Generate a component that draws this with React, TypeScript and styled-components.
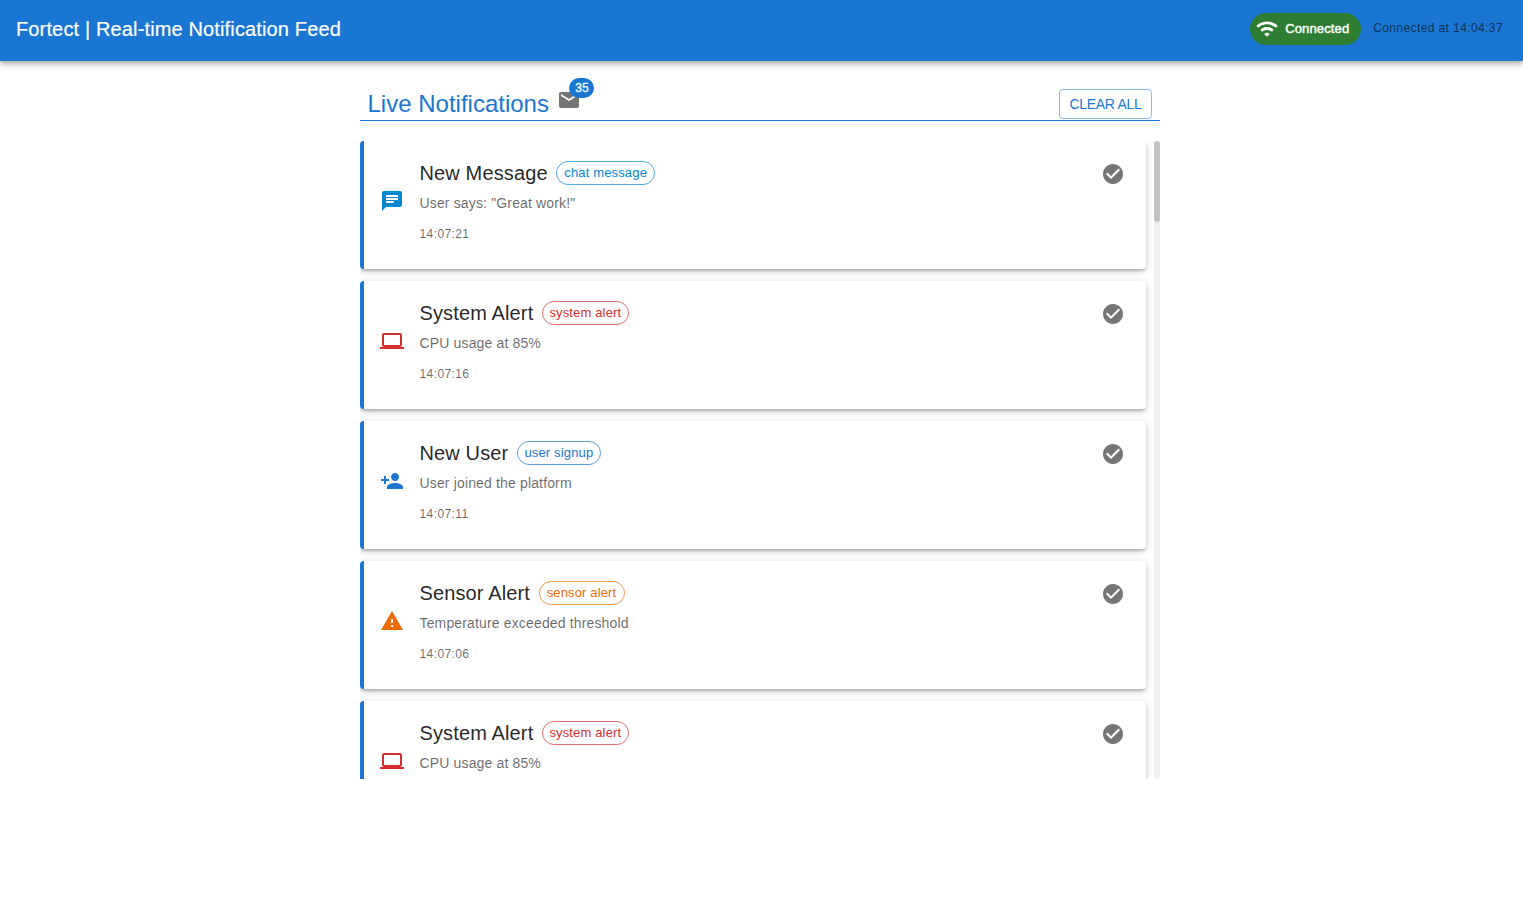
import React from 'react';
import styled, { createGlobalStyle } from 'styled-components';

const GlobalStyle = createGlobalStyle`
  *, *::before, *::after { box-sizing: border-box; }
  body {
    margin: 0;
    background: #fff;
    color: rgba(0, 0, 0, 0.87);
    font-family: "Liberation Sans", Arial, sans-serif;
  }
  h1, h2, h3, p { margin: 0; font-weight: 400; }
`;

const AppBar = styled.header`
  display: flex;
  align-items: center;
  justify-content: space-between;
  height: 61px;
  padding: 0 20px 4px 16px;
  background: #1976d2;
  color: #fff;
  box-shadow: 0 2px 4px -1px rgba(0, 0, 0, 0.2), 0 4px 5px 0 rgba(0, 0, 0, 0.14),
    0 1px 10px 0 rgba(0, 0, 0, 0.12);
`;

const AppTitle = styled.h1`
  font-size: 20px;
  line-height: 32px;
  letter-spacing: 0.14px;
  -webkit-text-stroke: 0.2px currentColor;
`;

const Status = styled.div`
  display: flex;
  align-items: center;
  gap: 12px;
`;

const StatusChip = styled.div`
  display: flex;
  align-items: center;
  gap: 6px;
  width: 111px;
  height: 32px;
  padding-left: 5px;
  border-radius: 16px;
  background: #2e7d32;
  font-size: 13px;
  letter-spacing: 0.14px;
  -webkit-text-stroke: 0.45px currentColor;
`;

const StatusTime = styled.span`
  color: rgba(0, 0, 0, 0.6);
  font-size: 12px;
  line-height: 20px;
  letter-spacing: 0.4px;
  padding-bottom: 2px;
`;

const Icon = styled.svg<{ $color?: string }>`
  display: block;
  flex: none;
  width: 24px;
  height: 24px;
  fill: ${(p) => p.$color ?? 'currentColor'};
`;

const Feed = styled.main`
  width: 800px;
  margin: 17px 0 0 360px;
`;

const FeedHeader = styled.div`
  display: flex;
  align-items: flex-end;
  justify-content: space-between;
  height: 43px;
  padding: 0 8px 1px 7.5px;
  border-bottom: 1px solid #1976d2;
`;

const Heading = styled.div`
  display: flex;
  align-items: flex-end;
  gap: 8.5px;
`;

const FeedTitle = styled.h2`
  color: #1976d2;
  font-size: 24px;
  line-height: 30px;
`;

const Mailbox = styled.div`
  position: relative;
  margin-bottom: 7px;
`;

const Badge = styled.span`
  position: absolute;
  top: -10px;
  left: 12px;
  width: 25px;
  height: 20px;
  border-radius: 10px;
  background: #1976d2;
  color: #fff;
  font-size: 12px;
  line-height: 20px;
  text-align: center;
  -webkit-text-stroke: 0.3px currentColor;
`;

const ClearButton = styled.button`
  width: 93px;
  height: 30px;
  padding: 0;
  border: 1px solid rgba(25, 118, 210, 0.5);
  border-radius: 4px;
  background: transparent;
  color: #1976d2;
  font: 14px/22px "Liberation Sans", Arial, sans-serif;
  letter-spacing: -0.3px;
  white-space: nowrap;
`;

const ScrollArea = styled.section`
  display: flex;
  justify-content: space-between;
  height: 638px;
  margin-top: 20px;
  overflow: hidden;
`;

const List = styled.div`
  display: flex;
  flex-direction: column;
  gap: 12px;
  width: 786px;
`;

const Track = styled.div`
  width: 6px;
  border-radius: 3px;
  background: #f1f1f1;
`;

const Thumb = styled.div`
  height: 81px;
  border-radius: 3px;
  background: #c1c1c1;
`;

const Card = styled.article`
  display: flex;
  flex: none;
  height: 128px;
  padding: 16px 21px 24px 16px;
  border-left: 4px solid #1976d2;
  border-radius: 4px;
  background: #fff;
  box-shadow: 0 3px 3px -2px rgba(0, 0, 0, 0.2), 0 3px 4px 0 rgba(0, 0, 0, 0.14),
    0 1px 8px 0 rgba(0, 0, 0, 0.12);
`;

const CardIcon = styled.div`
  display: flex;
  align-items: center;
  width: 39.5px;
`;

const CardBody = styled.div`
  flex: 1;
`;

const TitleRow = styled.div`
  display: flex;
  align-items: center;
  gap: 8.5px;
  height: 32px;
`;

const CardTitle = styled.h3`
  font-size: 20px;
  line-height: 32px;
  letter-spacing: 0.13px;
`;

const Tag = styled.span<{ $color: string; $border: string; $width: number }>`
  width: ${(p) => p.$width}px;
  height: 24px;
  border: 1px solid ${(p) => p.$border};
  border-radius: 12px;
  color: ${(p) => p.$color};
  font-size: 13px;
  line-height: 22px;
  letter-spacing: 0.15px;
  text-align: center;
  white-space: nowrap;
`;

const Message = styled.p`
  margin-top: 4px;
  color: rgba(0, 0, 0, 0.6);
  font-size: 14px;
  line-height: 20px;
  letter-spacing: 0.15px;
`;

const Time = styled.p`
  margin-top: 11px;
  color: rgba(0, 0, 0, 0.6);
  font-size: 12px;
  line-height: 20px;
  letter-spacing: 0.4px;
`;

const MarkRead = styled.div`
  padding-top: 5px;
`;

const paths = {
  wifi: 'M2.06 10.06c.51.51 1.32.56 1.87.1 4.67-3.84 11.45-3.84 16.13-.01.56.46 1.38.42 1.89-.09.59-.59.55-1.57-.1-2.1-5.71-4.67-13.97-4.67-19.69 0-.65.52-.7 1.5-.1 2.1m7.76 7.76 1.47 1.47c.39.39 1.02.39 1.41 0l1.47-1.47c.47-.47.37-1.28-.23-1.59-1.21-.63-2.68-.63-3.89 0-.6.31-.7 1.12-.23 1.59m-3.73-3.73c.49.49 1.26.54 1.83.13 2.44-1.73 5.72-1.73 8.16 0 .57.4 1.34.36 1.83-.13l.01-.01c.6-.6.56-1.62-.13-2.11-3.44-2.49-8.13-2.49-11.58 0-.69.5-.73 1.51-.12 2.12',
  mail: 'M20 4H4c-1.1 0-1.99.9-1.99 2L2 18c0 1.1.9 2 2 2h16c1.1 0 2-.9 2-2V6c0-1.1-.9-2-2-2m0 4-8 5-8-5V6l8 5 8-5z',
  check: 'M12 2C6.48 2 2 6.48 2 12s4.48 10 10 10 10-4.48 10-10S17.52 2 12 2m-2 15-5-5 1.41-1.41L10 14.17l7.59-7.59L19 8z',
  chat: 'M20 2H4c-1.1 0-1.99.9-1.99 2L2 22l4-4h14c1.1 0 2-.9 2-2V4c0-1.1-.9-2-2-2M6 9h12v2H6zm8 5H6v-2h8zm4-6H6V6h12z',
  laptop: 'M20 18c1.1 0 1.99-.9 1.99-2L22 6c0-1.1-.9-2-2-2H4c-1.1 0-2 .9-2 2v10c0 1.1.9 2 2 2H0v2h24v-2zM4 6h16v10H4z',
  person: 'M15 12c2.21 0 4-1.79 4-4s-1.79-4-4-4-4 1.79-4 4 1.79 4 4 4m-9-2V7H4v3H1v2h3v3h2v-3h3v-2zm9 4c-2.67 0-8 1.34-8 4v2h16v-2c0-2.66-5.33-4-8-4',
  warning: 'M1 21h22L12 2zm12-3h-2v-2h2zm0-4h-2v-4h2z',
};

const Glyph = ({ name, color }: { name: keyof typeof paths; color?: string }) => (
  <Icon viewBox="0 0 24 24" $color={color} aria-hidden="true">
    <path d={paths[name]} />
  </Icon>
);

type Kind = 'chat' | 'system' | 'signup' | 'sensor';

const kinds: Record<
  Kind,
  { icon: keyof typeof paths; title: string; tag: string; color: string; border: string; width: number }
> = {
  chat: { icon: 'chat', title: 'New Message', tag: 'chat message', color: '#0288d1', border: 'rgba(2,136,209,0.7)', width: 99 },
  system: { icon: 'laptop', title: 'System Alert', tag: 'system alert', color: '#d32f2f', border: 'rgba(211,47,47,0.7)', width: 87 },
  signup: { icon: 'person', title: 'New User', tag: 'user signup', color: '#1976d2', border: 'rgba(25,118,210,0.7)', width: 84 },
  sensor: { icon: 'warning', title: 'Sensor Alert', tag: 'sensor alert', color: '#ed6c02', border: 'rgba(237,108,2,0.7)', width: 86 },
};

const notifications: { kind: Kind; message: string; time?: string }[] = [
  { kind: 'chat', message: 'User says: "Great work!"', time: '14:07:21' },
  { kind: 'system', message: 'CPU usage at 85%', time: '14:07:16' },
  { kind: 'signup', message: 'User joined the platform', time: '14:07:11' },
  { kind: 'sensor', message: 'Temperature exceeded threshold', time: '14:07:06' },
  { kind: 'system', message: 'CPU usage at 85%' },
];

export default function App() {
  return (
    <>
      <GlobalStyle />
      <AppBar>
        <AppTitle>Fortect | Real-time Notification Feed</AppTitle>
        <Status>
          <StatusChip>
            <Glyph name="wifi" />
            Connected
          </StatusChip>
          <StatusTime>Connected at 14:04:37</StatusTime>
        </Status>
      </AppBar>
      <Feed>
        <FeedHeader>
          <Heading>
            <FeedTitle>Live Notifications</FeedTitle>
            <Mailbox>
              <Glyph name="mail" color="#757575" />
              <Badge>35</Badge>
            </Mailbox>
          </Heading>
          <ClearButton>CLEAR ALL</ClearButton>
        </FeedHeader>
        <ScrollArea>
          <List>
            {notifications.map(({ kind, message, time }, index) => {
              const k = kinds[kind];
              return (
                <Card key={index}>
                  <CardIcon>
                    <Glyph name={k.icon} color={k.color} />
                  </CardIcon>
                  <CardBody>
                    <TitleRow>
                      <CardTitle>{k.title}</CardTitle>
                      <Tag $color={k.color} $border={k.border} $width={k.width}>
                        {k.tag}
                      </Tag>
                    </TitleRow>
                    <Message>{message}</Message>
                    {time && <Time>{time}</Time>}
                  </CardBody>
                  <MarkRead>
                    <Glyph name="check" color="#757575" />
                  </MarkRead>
                </Card>
              );
            })}
          </List>
          <Track>
            <Thumb />
          </Track>
        </ScrollArea>
      </Feed>
    </>
  );
}
